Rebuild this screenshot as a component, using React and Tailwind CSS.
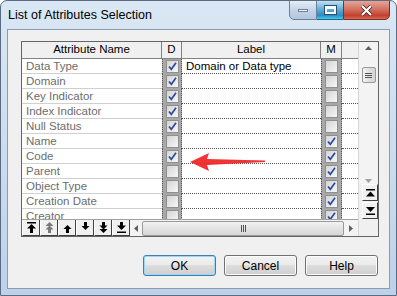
import React from 'react'

const ROWS = [
  { name: 'Data Type', d: true, label: 'Domain or Data type', m: false },
  { name: 'Domain', d: true, label: '', m: false },
  { name: 'Key Indicator', d: true, label: '', m: false },
  { name: 'Index Indicator', d: true, label: '', m: false },
  { name: 'Null Status', d: true, label: '', m: false },
  { name: 'Name', d: false, label: '', m: true },
  { name: 'Code', d: true, label: '', m: true },
  { name: 'Parent', d: false, label: '', m: true },
  { name: 'Object Type', d: false, label: '', m: true },
  { name: 'Creation Date', d: false, label: '', m: true },
  { name: 'Creator', d: false, label: '', m: true },
]

function Check({ on }) {
  return (
    <div className="w-[13px] h-[13px] border border-[#8f8f8f] bg-[linear-gradient(135deg,#d4d4d4,#f7f7f7)] flex items-center justify-center">
      {on && (
        <svg width="9" height="9" viewBox="0 0 9 9">
          <path d="M1 4.5 L3.3 7.3 L8 0.8" fill="none" stroke="#2b4a9e" strokeWidth="1.7" />
        </svg>
      )}
    </div>
  )
}

function CheckCell({ on, w }) {
  return (
    <div className={`${w} h-full shrink-0 bg-[#a8a8a8] border-x border-dotted border-[#5a5a5a] flex items-center justify-center`}>
      <Check on={on} />
    </div>
  )
}

// small arrows for the toolbar under the grid
function ToolIcon({ kind }) {
  const c = kind === 'pgup' ? '#7a7a7a' : '#000'
  return (
    <svg width="11" height="11" viewBox="0 0 11 11">
      {kind === 'top' && <><rect x="1" y="0" width="9" height="1.5" fill={c} /><path d="M5.5 2 L10 6.5 H7 V11 H4 V6.5 H1 Z" fill={c} /></>}
      {kind === 'pgup' && <><path d="M5.5 0 L9.5 4 H1.5 Z" fill={c} /><path d="M5.5 3.5 L9.5 7.5 H7 V11 H4 V7.5 H1.5 Z" fill={c} /></>}
      {kind === 'up' && <path d="M5.5 3 L9.5 7 H7 V11 H4 V7 H1.5 Z" fill={c} />}
      {kind === 'down' && <path d="M5.5 8 L9.5 4 H7 V0 H4 V4 H1.5 Z" fill={c} />}
      {kind === 'pgdn' && <><path d="M5.5 7.5 L9.5 3.5 H7 V0 H4 V3.5 H1.5 Z" fill={c} /><path d="M5.5 11 L9.5 7 H1.5 Z" fill={c} /></>}
      {kind === 'bottom' && <><path d="M5.5 8 L10 3.5 H7 V0 H4 V3.5 H1 Z" fill={c} /><rect x="1" y="9.5" width="9" height="1.5" fill={c} /></>}
    </svg>
  )
}

function DlgButton({ children, focus }) {
  return (
    <button className={`w-[73px] h-[21px] rounded-[3px] border text-[12px] text-black bg-[linear-gradient(180deg,#f2f2f2_0%,#ebebeb_45%,#dddddd_50%,#cfcfcf_100%)] ${focus ? 'border-[#3c7fb1] shadow-[inset_0_0_0_1px_#9ad8f5]' : 'border-[#707070] shadow-[inset_0_0_0_1px_#fcfcfc]'}`}>
      {children}
    </button>
  )
}

export default function App() {
  return (
    <div className="w-[397px] h-[296px] relative overflow-hidden rounded-t-[7px] border border-[#5a6b82] bg-[linear-gradient(180deg,#dae7f4_0%,#cfdff0_40%,#bcd2ea_100%)]" style={{ fontFamily: '"Liberation Sans", Arial, sans-serif' }}>
      {/* title bar */}
      <div className="h-[28px] flex items-center pl-[7px] text-[12.5px] text-black">
        List of Attributes Selection
      </div>
      <div className="absolute top-[-1px] right-[6px] flex h-[20px]">
        <div className="w-[28px] h-full border border-[#6d7f99] rounded-bl-[5px] bg-[linear-gradient(180deg,#e6edf6,#c4d3e6_50%,#b3c6de)] flex items-center justify-center">
          <div className="w-[10px] h-[3px] bg-[#f4f6f9] border border-[#6d7f99]" />
        </div>
        <div className="w-[26px] h-full border-y border-[#2f5f86] bg-[linear-gradient(180deg,#bfe0f3,#5aa9d4_50%,#2d8cc4_80%,#37d1f0)] flex items-center justify-center">
          <div className="w-[11px] h-[8px] border-2 border-t-[3px] border-[#f7fbff] shadow-[0_0_0_1px_#2d4d6e]" />
        </div>
        <div className="w-[47px] h-full border border-[#7c2f2a] rounded-br-[5px] bg-[linear-gradient(180deg,#e5a497,#d06e5d_50%,#c2412d_80%,#d86a4e)] flex items-center justify-center">
          <svg width="13" height="11" viewBox="0 0 13 11">
            <path d="M2 1 L11 10 M11 1 L2 10" stroke="#3d1a14" strokeWidth="3.6" />
            <path d="M2 1 L11 10 M11 1 L2 10" stroke="#ffffff" strokeWidth="2.2" />
          </svg>
        </div>
      </div>

      {/* client area */}
      <div className="absolute left-[6px] right-[6px] top-[28px] bottom-[6px] bg-[#f0f0f0] border border-[#8a9bb3] pl-[13px] pt-[11px]">
        {/* grid */}
        <div className="w-[358px] h-[196px] border border-[#646464] bg-white flex">
          <div className="w-[336px] flex flex-col">
            {/* header */}
            <div className="h-[17px] flex text-[11.5px] text-black bg-[#f0f0f0] border-b border-[#808080]">
              <div className="w-[140px] border-r border-[#808080] flex items-center justify-center">Attribute Name</div>
              <div className="w-[20px] border-r border-[#808080] flex items-center justify-center">D</div>
              <div className="w-[139px] border-r border-[#808080] flex items-center justify-center">Label</div>
              <div className="w-[21px] border-r border-[#808080] flex items-center justify-center">M</div>
              <div className="flex-1" />
            </div>
            {/* rows */}
            <div className="h-[160px] overflow-hidden">
              {ROWS.map(r => (
                <div key={r.name} className="h-[15px] flex text-[11.5px]">
                  <div className="w-[140px] shrink-0 pl-[4px] text-[#6d6d6d] leading-[15px] border-b border-[#d0d0d0]">{r.name}</div>
                  <CheckCell on={r.d} w="w-[20px]" />
                  <div className="w-[139px] shrink-0 pl-[4px] text-black leading-[15px] border-b border-dotted border-[#555]">{r.label}</div>
                  <CheckCell on={r.m} w="w-[21px]" />
                  <div className="flex-1 border-b border-dotted border-[#555]" />
                </div>
              ))}
            </div>
            {/* toolbar + horizontal scrollbar */}
            <div className="h-[17px] flex bg-[#f0f0f0] border-t border-[#a0a0a0]">
              {['top', 'pgup', 'up', 'down', 'pgdn', 'bottom'].map(k => (
                <div key={k} className="w-[18px] h-full border-r border-b border-[#404040] border-l border-l-white flex items-center justify-center bg-[#f0f0f0]">
                  <ToolIcon kind={k} />
                </div>
              ))}
              <div className="flex-1 flex items-center bg-[#f3f3f3]">
                <div className="w-[12px] flex justify-center">
                  <svg width="4" height="7" viewBox="0 0 4 7"><path d="M4 0 L0 3.5 L4 7 Z" fill="#606060" /></svg>
                </div>
                <div className="flex-1 h-[15px] rounded-[2px] border border-[#9a9a9a] bg-[linear-gradient(180deg,#f3f3f3,#e3e3e3_50%,#d6d6d6)] flex items-center justify-center">
                  <div className="flex gap-[1px]">
                    <div className="w-[1px] h-[7px] bg-[#555]" />
                    <div className="w-[1px] h-[7px] bg-[#555]" />
                    <div className="w-[1px] h-[7px] bg-[#555]" />
                  </div>
                </div>
                <div className="w-[14px] flex justify-center">
                  <svg width="4" height="7" viewBox="0 0 4 7"><path d="M0 0 L4 3.5 L0 7 Z" fill="#606060" /></svg>
                </div>
              </div>
            </div>
          </div>
          {/* vertical scrollbar */}
          <div className="flex-1 flex flex-col bg-[#f3f3f3] border-l border-[#d6d6d6]">
            <div className="h-[142px] flex flex-col items-center pt-[2px]">
              <svg width="7" height="4" viewBox="0 0 7 4" className="mt-[2px]"><path d="M0 4 L3.5 0 L7 4 Z" fill="#606060" /></svg>
              <div className="mt-[17px] w-[14px] h-[16px] rounded-[2px] border border-[#9a9a9a] bg-[linear-gradient(90deg,#f3f3f3,#e0e0e0_50%,#d4d4d4)] flex flex-col items-center justify-center gap-[1px]">
                <div className="w-[7px] h-[1px] bg-[#555]" />
                <div className="w-[7px] h-[1px] bg-[#555]" />
                <div className="w-[7px] h-[1px] bg-[#555]" />
              </div>
              <div className="flex-1" />
              <svg width="7" height="4" viewBox="0 0 7 4" className="mb-[1px]"><path d="M0 0 L3.5 4 L7 0 Z" fill="#a0a0a0" /></svg>
            </div>
            <div className="pl-[3px] flex flex-col gap-[1px] bg-[#f0f0f0]">
              <div className="w-[16px] h-[17px] border border-[#404040] border-t-white border-l-white flex items-center justify-center">
                <svg width="9" height="8" viewBox="0 0 9 8"><rect x="0" y="0" width="9" height="1.5" fill="#000" /><path d="M4.5 2.5 L9 7.5 H0 Z" fill="#000" /></svg>
              </div>
              <div className="w-[16px] h-[17px] border border-[#404040] border-t-white border-l-white flex items-center justify-center">
                <svg width="9" height="8" viewBox="0 0 9 8"><path d="M0 0 H9 L4.5 5 Z" fill="#000" /><rect x="0" y="6.5" width="9" height="1.5" fill="#000" /></svg>
              </div>
            </div>
            <div className="flex-1 bg-[#f0f0f0]" />
          </div>
        </div>

        {/* dialog buttons */}
        <div className="mt-[18px] pr-[11px] flex justify-end gap-[8px]">
          <DlgButton focus>OK</DlgButton>
          <DlgButton>Cancel</DlgButton>
          <DlgButton>Help</DlgButton>
        </div>
      </div>

      {/* red annotation arrow */}
      <svg className="absolute left-[189px] top-[151px]" width="76" height="20" viewBox="0 0 76 20">
        <path d="M0 10 L19 1 L17 7 L75 8.5 L75 10 L17 13 L19 19 Z" fill="#f0282b" opacity="0.95" />
      </svg>
    </div>
  )
}
